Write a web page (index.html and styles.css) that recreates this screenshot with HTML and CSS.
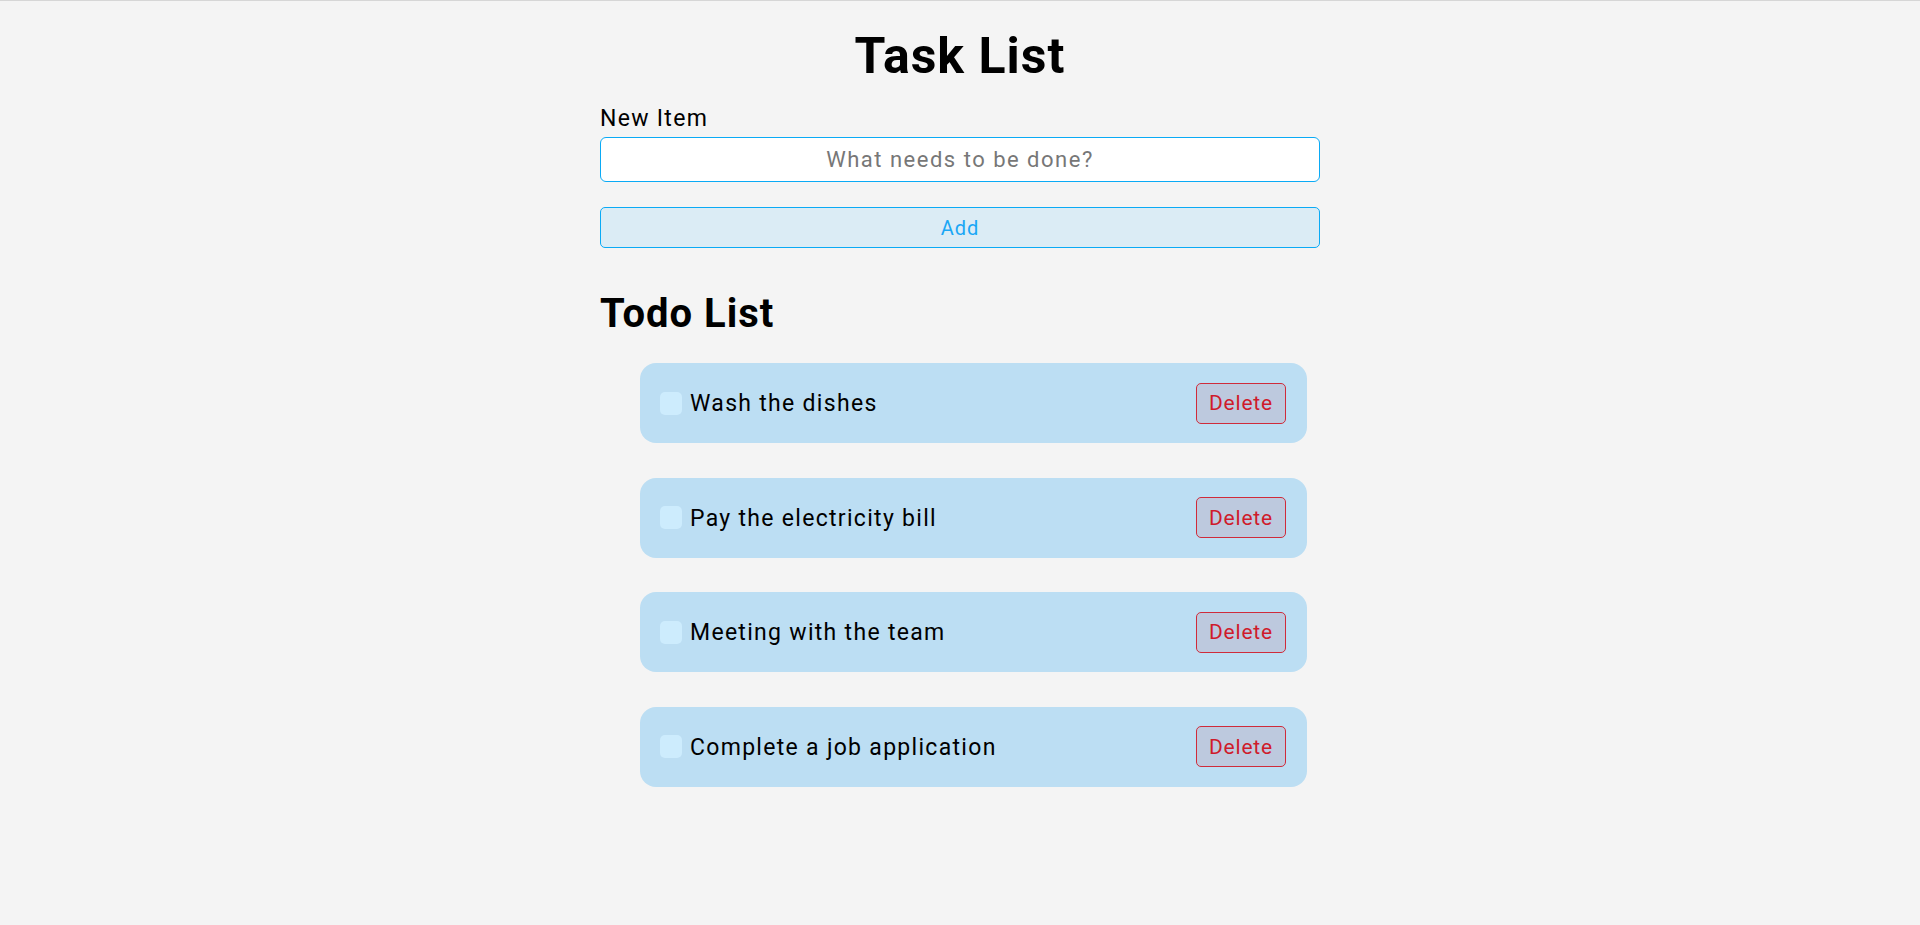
FILE: index.html
```html
<!DOCTYPE html>
<html lang="en">
<head>
<meta charset="utf-8">
<title>Task List</title>
<link rel="stylesheet" href="styles.css">
</head>
<body>
<main class="app">
  <h1 class="title">Task List</h1>
  <form class="new-form" onsubmit="return false">
    <label class="new-label" for="new-item">New Item</label>
    <input class="new-input" id="new-item" type="text" placeholder="What needs to be done?">
    <button class="add-btn" type="submit">Add</button>
  </form>
  <h2 class="list-title">Todo List</h2>
  <ul class="todo-list">
    <li class="todo">
      <label class="todo-label"><span class="check"></span><span class="todo-text">Wash the dishes</span></label>
      <button class="delete-btn" type="button">Delete</button>
    </li>
    <li class="todo">
      <label class="todo-label"><span class="check"></span><span class="todo-text">Pay the electricity bill</span></label>
      <button class="delete-btn" type="button">Delete</button>
    </li>
    <li class="todo">
      <label class="todo-label"><span class="check"></span><span class="todo-text">Meeting with the team</span></label>
      <button class="delete-btn" type="button">Delete</button>
    </li>
    <li class="todo">
      <label class="todo-label"><span class="check"></span><span class="todo-text">Complete a job application</span></label>
      <button class="delete-btn" type="button">Delete</button>
    </li>
  </ul>
</main>
</body>
</html>
```

FILE: styles.css
```css
* { box-sizing: border-box; }

html, body { height: 100%; }

body {
  margin: 0;
  background: #f4f4f4;
  border-top: 1px solid #d6d6d6;
  font-family: Roboto, "Liberation Sans", sans-serif;
  color: #000;
}

.app {
  width: 720px;
  margin: 0 auto;
}

.title {
  margin: 25px 0 19px;
  font-size: 50px;
  line-height: 60px;
  font-weight: 700;
  letter-spacing: 1px;
  text-align: center;
}

.new-form {
  display: flex;
  flex-direction: column;
}

.new-label {
  font-size: 23px;
  line-height: 28px;
  letter-spacing: 1.3px;
  margin-bottom: 4px;
}

.new-input {
  height: 45px;
  width: 100%;
  border: 1px solid #0aaaf5;
  border-radius: 6px;
  background: #fff;
  font-family: inherit;
  font-size: 22px;
  letter-spacing: 1.5px;
  text-align: center;
  color: #222;
  outline: none;
}

.new-input::placeholder { color: #777; }

.add-btn {
  margin-top: 25px;
  height: 41px;
  width: 100%;
  border: 1px solid #0aaaf5;
  border-radius: 5px;
  background: #dbecf5;
  color: #1aa7f5;
  font-family: inherit;
  font-size: 20px;
  letter-spacing: 1px;
}

.list-title {
  margin: 43px 0 26px;
  font-size: 40px;
  line-height: 46px;
  font-weight: 700;
  letter-spacing: 1px;
}

.todo-list {
  list-style: none;
  margin: 0 13px 0 0;
  padding: 0 0 0 40px;
  display: flex;
  flex-direction: column;
  gap: 34.5px;
}

.todo {
  height: 80px;
  display: flex;
  align-items: center;
  justify-content: space-between;
  padding: 0 21px 0 20px;
  background: #bcdef3;
  border-radius: 16px;
}

.todo-label {
  display: flex;
  align-items: center;
  gap: 8px;
}

.check {
  width: 22px;
  height: 23px;
  border-radius: 5px;
  background: #cdecfd;
}

.todo-text {
  font-size: 23px;
  line-height: 28px;
  padding-top: 2px;
  letter-spacing: 1.3px;
}

.delete-btn {
  width: 90px;
  height: 41px;
  border: 1px solid #cf2b3a;
  border-radius: 5px;
  background: #bdc9de;
  color: #cf1b2b;
  font-family: inherit;
  font-size: 21px;
  letter-spacing: 0.8px;
}
```
